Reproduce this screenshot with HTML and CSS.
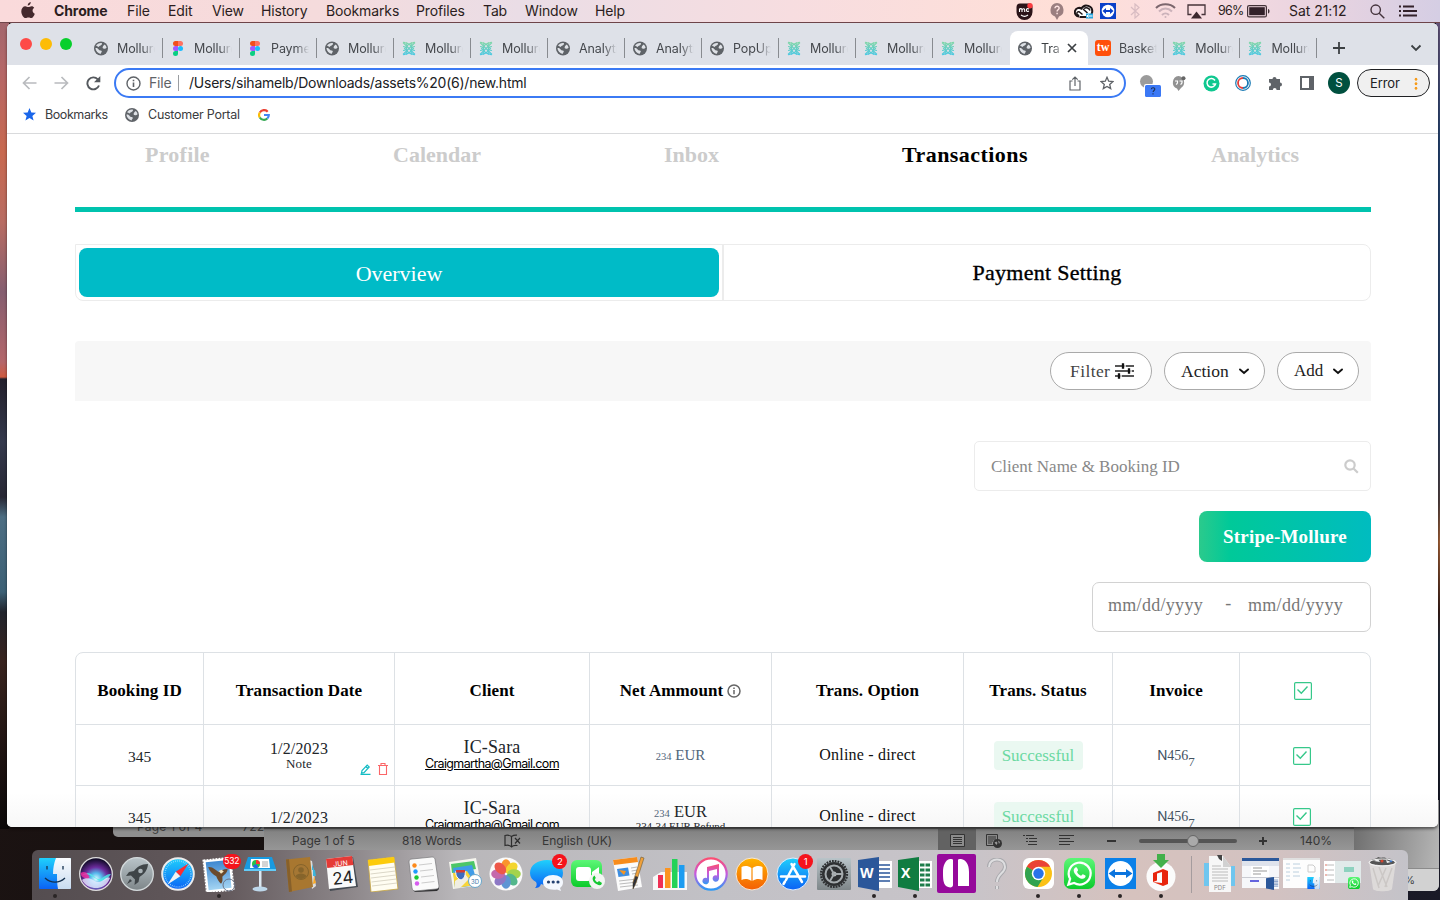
FILE: index.html
```html
<!DOCTYPE html>
<html lang="en">
<head>
<meta charset="utf-8">
<title>Transactions</title>
<link rel="stylesheet" href="styles.css">
</head>
<body>
<svg class="defs" width="0" height="0" aria-hidden="true">
  <defs>
    <linearGradient id="gm" x1="0" y1="0" x2="0" y2="1"><stop offset="0" stop-color="#7fd6a8"/><stop offset="1" stop-color="#4cc8e0"/></linearGradient>
    <linearGradient id="gblue" x1="0" y1="0" x2="0" y2="1"><stop offset="0" stop-color="#1fd0fc"/><stop offset="1" stop-color="#0b62f5"/></linearGradient>
    <linearGradient id="gface" x1="0" y1="0" x2="0" y2="1"><stop offset="0" stop-color="#fafcff"/><stop offset="1" stop-color="#c9dcf0"/></linearGradient>
    <linearGradient id="ggreen" x1="0" y1="0" x2="0" y2="1"><stop offset="0" stop-color="#5cf777"/><stop offset="1" stop-color="#0bcb2b"/></linearGradient>
    <linearGradient id="gorange" x1="0" y1="0" x2="0" y2="1"><stop offset="0" stop-color="#ffb400"/><stop offset="1" stop-color="#f45f05"/></linearGradient>
    <linearGradient id="gsilver" x1="0" y1="0" x2="0" y2="1"><stop offset="0" stop-color="#b9c4c9"/><stop offset="1" stop-color="#7e8689"/></linearGradient>
    <linearGradient id="gnote" x1="0" y1="0" x2="0" y2="1"><stop offset="0" stop-color="#fb4d72"/><stop offset=".5" stop-color="#c55be0"/><stop offset="1" stop-color="#2d9af5"/></linearGradient>
    <linearGradient id="gsky" x1="0" y1="0" x2="0" y2="1"><stop offset="0" stop-color="#3f88d0"/><stop offset="1" stop-color="#a3d4f3"/></linearGradient>
    <radialGradient id="gsiri" cx=".5" cy=".65" r=".6"><stop offset="0" stop-color="#dffcff"/><stop offset=".3" stop-color="#55b8ec"/><stop offset=".6" stop-color="#6b2b9c"/><stop offset="1" stop-color="#140c2c"/></radialGradient>
  </defs>
  <symbol id="globe" viewBox="0 0 14 14"><circle cx="7" cy="7" r="7" fill="#5f6368"/><path d="M7.800 1.500C5.600 1 3 2.200 2 4.500c1.200-.2 1.800.7 2.600.9.500-.8 1.200-1.100 2-1.400.9-.4 1.800-1.200 1.200-2.500zM1.400 6.800c.4 3 2.600 5.200 5.400 5.700-.2-1.200.8-1.500 1-2.300.1-.9-.6-1.200-1.500-1.300-1.400-.1-1.600-1.500-2.700-2-.7-.3-1.400-.4-2.200-.1zM12.600 6.300c-.2-1.300-.8-2.500-1.800-3.400-.7.400-1.400 1.100-1.900 2-.5 1-.4 1.700.5 2 1 .3 2.100.5 3.200-.6z" fill="#dee1e6"/></symbol>
  <symbol id="figma" viewBox="0 0 10 15"><path d="M0 2.500A2.500 2.500 0 0 1 2.500 0H5v5H2.500A2.500 2.500 0 0 1 0 2.500z" fill="#f24e1e"/><path d="M5 0h2.500a2.500 2.500 0 0 1 0 5H5z" fill="#ff7262"/><path d="M0 7.500A2.500 2.500 0 0 1 2.500 5H5v5H2.500A2.500 2.500 0 0 1 0 7.500z" fill="#a259ff"/><circle cx="7.500" cy="7.500" r="2.500" fill="#1abcfe"/><path d="M0 12.500A2.500 2.500 0 0 1 2.500 10H5v2.500a2.500 2.500 0 0 1-5 0z" fill="#0acf83"/></symbol>
  <symbol id="mol" viewBox="0 0 14 14"><g fill="none" stroke="url(#gm)" stroke-width="1.100"><path d="M1 .8c3 0 4 1 4 4S4 9 1 9M13 .8c-3 0-4 1-4 4s1 4.200 4 4.200M1 13.200c3 0 4-1 4-4S4 5 1 5M13 13.200c-3 0-4-1-4-4S10 5 13 5"/><path d="M1 1l12 12M13 1 1 13"/><path d="M7 2.500 11.500 7 7 11.500 2.500 7zM4 1l3 1.800L10 1M4 13l3-1.800 3 1.800"/></g></symbol>
  <symbol id="check" viewBox="0 0 18 18"><rect x=".6" y=".6" width="16.800" height="16.800" rx="1.200" fill="#fff" stroke="#36c88a" stroke-width="1.200"/><path d="M3.500 7.600 7.300 11.300 13.500 4.600" fill="none" stroke="#36c88a" stroke-width="1.400"/></symbol>
  <symbol id="chev" viewBox="0 0 10 7"><path d="M1 1.500 5 5l4-3.500" fill="none" stroke="#111" stroke-width="1.900" stroke-linecap="round"/></symbol>
  <symbol id="wa" viewBox="0 0 32 32"><rect width="32" height="32" rx="7" fill="url(#ggreen)"/><path d="M4.500 27.500 6.300 21.500A11.300 11.300 0 1 1 10.500 25.800z" fill="none" stroke="#fff" stroke-width="2.300"/><path d="M11.500 10c1-1 1.800-.5 2.200.6l.8 1.900c.2.700-1 1.600-1 2 .8 1.700 2.200 3 4 3.700.6.100 1.400-1.700 2.100-1.400l2.500 1.200c.7.400-.2 3.200-2.600 3.500-3.500.2-9.300-4.700-9.500-8.700 0-1.100.6-2 1.500-2.800z" fill="#fff"/></symbol>
  <symbol id="word" viewBox="0 0 34 34"><path d="M19 4h15v27H19z" fill="#fff"/><path d="M21 8h11M21 12h11M21 16h11M21 20h11M21 24h11" stroke="#2a559b" stroke-width="1.500"/><path d="M0 3 21 0v34L0 30z" fill="#2b579a"/></symbol>
  <symbol id="finder" viewBox="0 0 32 31"><rect width="32" height="31" rx="1" fill="url(#gblue)"/><path d="M17 0c-2 5-3 10-3 16h4c0 5 0 10 1 15h12a1 1 0 0 0 1-1V1a1 1 0 0 0-1-1z" fill="url(#gface)"/><path d="M8 8v3.500M24 8v3.500M6 20c6 5.500 14 5.500 20 0" fill="none" stroke="#14304e" stroke-width="1.300"/></symbol>
</svg>

<div class="desktop">
  <div class="edge-left"></div>
  <div class="edge-right"></div>

  <div class="win-a"><span>Page 1 of 4</span><span>722</span></div>
  <div class="win-c"><div class="win-c-foot">%</div></div>
  <div class="win-b">
    <span class="wb wb1">Page 1 of 5</span><span class="wb wb2">818 Words</span>
    <svg class="wb3" width="17" height="14" viewBox="0 0 17 14" fill="none" stroke="#2e2e2e" stroke-width="1.200"><path d="M7.500 2.500C6 1.500 3 1 1 1.500v10c2-.5 5 0 6.500 1.200zM7.500 2.500C9 1.500 11 1 13 1.200M7.500 12.700c1.500-1.200 3.500-1.700 6-1.200M11 4l5 5.500M16 4l-5 5.500"/></svg>
    <span class="wb wb4">English (UK)</span>
    <span class="views">
      <span class="view-on"><svg width="15" height="13" viewBox="0 0 15 13"><path d="M.5.500h14v12H.5z" fill="#8c8c8c" stroke="#333"/><path d="M3 3.500h9M3 5.500h9M3 7.500h9M3 9.500h9" stroke="#333"/></svg></span>
      <svg width="16" height="14" viewBox="0 0 16 14"><path d="M.5.500h11v11H.5z" fill="none" stroke="#333"/><path d="M2 3h8M2 5h8M2 7h5M2 9h4" stroke="#333"/><circle cx="11.500" cy="9.500" r="4.500" fill="#333"/><path d="M8.500 8.500l2-1 1 1.500-1 2zM12 6.500l2 1.500-1 2z" fill="#999"/></svg>
      <svg width="15" height="11" viewBox="0 0 15 11"><path d="M0 .5h2M3 .5h8M3 3.500h2M6 3.500h8M3 6.500h2M6 6.500h8M5 9.500h9" stroke="#333" stroke-width="1.200"/></svg>
      <svg width="15" height="11" viewBox="0 0 15 11"><path d="M0 .5h15M0 3.500h11M0 6.500h15M0 9.500h11" stroke="#333" stroke-width="1.200"/></svg>
    </span>
    <span class="zoomer"><i class="minus"></i><span class="track"><i class="knob"></i></span><i class="plus"></i><span>140%</span></span>
  </div>

  <header class="menubar">
    <nav class="menus">
      <svg width="14" height="17" viewBox="0 0 14 17"><path d="M9.800 0c.1 1.900-1.400 3.600-3.100 3.600C6.500 2 8 .3 9.800 0zM13.200 5.700c-2.500 1.600-1.900 4.900.6 6-.6 1.900-2 4.300-3.500 4.300-1 0-1.600-.6-2.800-.6s-1.900.6-2.900.6C2.500 16 .3 12.500.3 9.200c0-3 1.900-5 4-5 1.200 0 2.100.8 3.100.8.900 0 1.900-.8 3.300-.8 1 0 2 .6 2.500 1.500z" fill="#44292d"/></svg>
      <b>Chrome</b><span>File</span><span>Edit</span><span>View</span><span>History</span><span>Bookmarks</span><span>Profiles</span><span>Tab</span><span>Window</span><span>Help</span>
    </nav>
    <div class="status">
      <svg width="17" height="17" viewBox="0 0 17 17"><path d="M4 .5h9a3.500 3.500 0 0 1 3.500 3.500v5A8 8 0 0 1 .5 9V4A3.500 3.500 0 0 1 4 .5z" fill="#2b1418"/><path d="M3.500 9V5.500M3.500 6.500c1-1.500 2.500-1 2.500.5V9M6 7c.7-1.800 2.700-1.500 2.700.3V9M13 6c-1.500-1-3 0-2.500 1.500s1.500 1 2.500.5M5 12c2 1.500 5 1.500 7 0" fill="none" stroke="#fff" stroke-width="1.100"/><circle cx="14" cy="2.800" r="2.700" fill="#fa3d41"/></svg>
      <svg width="14" height="17" viewBox="0 0 14 17"><path d="M7 0a7 7 0 0 1 2 13.500L7 17l-2-3.500A7 7 0 0 1 7 0z" fill="#9b7f80"/><path d="M5 5.200c0-2.700 4.300-2.500 4.100 0C9 6.800 7.100 6.800 7.100 8.500M7.100 9.700v1.500" fill="none" stroke="#ffe4e2" stroke-width="1.500"/></svg>
      <svg width="20" height="15" viewBox="0 0 20 15"><path d="M5 12.500a4.300 4.300 0 1 1 2.500-7.900A5.700 5.700 0 1 1 12.500 13H5.500" fill="#fff" stroke="#1d1416" stroke-width="2"/><path d="M8.500 10.500 5.500 8a1.700 1.700 0 1 0-.3 3M9 5l4.500 4M16 6.500a4 4 0 0 0-6-2" fill="none" stroke="#1d1416" stroke-width="1.500"/><path d="M12 9.500h7v5h-7z" fill="#27a5df"/><path d="M12.500 12h6M14.500 10.500 13 12l1.500 1.500" fill="none" stroke="#fff"/></svg>
      <svg width="16" height="16" viewBox="0 0 16 16"><rect width="16" height="16" fill="#0a3fc8"/><circle cx="8" cy="8" r="6.300" fill="#fff"/><path d="M2.500 8 6 5v2h4V5l3.500 3L10 11V9H6v2z" fill="#0a3fc8"/></svg>
      <svg width="10" height="16" viewBox="0 0 10 16"><path d="M1 4l8 7.500-4 3.500V1l4 3.500L1 12" fill="none" stroke="#d8bcc2" stroke-width="1.200"/></svg>
      <svg width="21" height="16" viewBox="0 0 21 16" fill="none" stroke-width="2"><path d="M1 5c5-5 14-5 19 0" stroke="#7b666d"/><path d="M4 8.500c4-4 9-4 13 0M7 12c2-2 5-2 7 0" stroke="#cbb2ba"/><circle cx="10.500" cy="14" r="1" fill="#cbb2ba" stroke="none"/></svg>
      <svg width="19" height="15" viewBox="0 0 19 15"><path d="M4.500 10.500H1V1h17v9.500h-3.500" fill="none" stroke="#463339" stroke-width="1.300"/><path d="M9.500 7.500 15 14.500H4z" fill="#3c282e"/></svg>
      <span class="pct">96%</span>
      <svg width="23" height="13" viewBox="0 0 23 13"><rect x=".6" y=".6" width="18.800" height="11.300" rx="1.500" fill="none" stroke="#433238" stroke-width="1.200"/><rect x="2.200" y="2.200" width="15.600" height="8" fill="#33212a"/><path d="M21 4c2 .5 2 4 0 4.500z" fill="#433238"/></svg>
      <span class="clock">Sat 21:12</span>
      <svg width="15" height="15" viewBox="0 0 15 15" fill="none" stroke="#43323b" stroke-width="1.400"><circle cx="5.700" cy="5.700" r="4.700"/><path d="M9.200 9.200 14.300 14.300"/></svg>
      <svg width="18" height="12" viewBox="0 0 18 12"><path d="M0 1.500h2M4 1.500h11M0 6h2M4 6h14M0 10.500h2M4 10.500h14" stroke="#33212a" stroke-width="1.800"/></svg>
    </div>
  </header>

  <section class="chrome">
    <div class="tabstrip">
      <div class="lights"><i class="r"></i><i class="y"></i><i class="g"></i></div>
      <div class="tabs">
        <div class="tab"><svg><use href="#globe"/></svg><span>Mollure</span></div>
        <div class="tab"><svg><use href="#figma"/></svg><span>Mollure</span></div>
        <div class="tab"><svg><use href="#figma"/></svg><span>Payme</span></div>
        <div class="tab"><svg><use href="#globe"/></svg><span>Mollure</span></div>
        <div class="tab"><svg><use href="#mol"/></svg><span>Mollure</span></div>
        <div class="tab"><svg><use href="#mol"/></svg><span>Mollure</span></div>
        <div class="tab"><svg><use href="#globe"/></svg><span>Analyti</span></div>
        <div class="tab"><svg><use href="#globe"/></svg><span>Analyti</span></div>
        <div class="tab"><svg><use href="#globe"/></svg><span>PopUp</span></div>
        <div class="tab"><svg><use href="#mol"/></svg><span>Mollure</span></div>
        <div class="tab"><svg><use href="#mol"/></svg><span>Mollure</span></div>
        <div class="tab nosep"><svg><use href="#mol"/></svg><span>Mollure</span></div>
        <div class="tab active"><svg><use href="#globe"/></svg><span>Tra</span><svg class="x" viewBox="0 0 10 10"><path d="M1 1l8 8M9 1 1 9" stroke="#3c4043" stroke-width="1.700"/></svg></div>
        <div class="tab late"><em>tw</em><span>Basket</span></div>
        <div class="tab late"><svg><use href="#mol"/></svg><span>Mollure</span></div>
        <div class="tab late"><svg><use href="#mol"/></svg><span>Mollure</span></div>
      </div>
      <svg class="newtab" width="12" height="12" viewBox="0 0 12 12"><path d="M6 0v12M0 6h12" stroke="#3c4043" stroke-width="1.800"/></svg>
      <svg class="tabsmenu" width="12" height="8" viewBox="0 0 12 8"><path d="M1.500 1.500 6 6l4.500-4.500" fill="none" stroke="#3c4043" stroke-width="1.800"/></svg>
    </div>
    <div class="toolbar">
      <div class="navbtns">
        <svg width="15" height="14" viewBox="0 0 15 14" fill="none" stroke="#b9bbbe" stroke-width="1.700"><path d="M14.500 7H1.500M7.500 1 1.500 7l6 6"/></svg>
        <svg width="15" height="14" viewBox="0 0 15 14" fill="none" stroke="#b9bbbe" stroke-width="1.700"><path d="M.5 7h13M7.500 1l6 6-6 6"/></svg>
        <svg width="15" height="15" viewBox="0 0 15 15"><path d="M13 9.500A6 6 0 1 1 11.800 3.300" fill="none" stroke="#55595e" stroke-width="1.900"/><path d="M14.300 0v6.300H8z" fill="#55595e"/></svg>
      </div>
      <div class="omni">
        <svg width="15" height="15" viewBox="0 0 15 15"><circle cx="7.500" cy="7.500" r="6.500" fill="none" stroke="#5f6368" stroke-width="1.400"/><path d="M7.500 6.500V11M7.500 3.700v1.600" stroke="#5f6368" stroke-width="1.600"/></svg>
        <span class="scheme">File</span><i></i><span class="url">/Users/sihamelb/Downloads/assets%20(6)/new.html</span>
        <svg class="share" width="12" height="15" viewBox="0 0 12 15" fill="none" stroke="#5f6368" stroke-width="1.200"><path d="M3.500 5H1v9h10V5H8.500M6 10V1.200M3.300 3.700 6 1l2.700 2.700"/></svg>
        <svg width="14" height="14" viewBox="0 0 14 14"><path d="M7 1.300 8.700 5.200l4.200.4-3.200 2.800 1 4.200L7 10.400l-3.700 2.200 1-4.200L1.100 5.600l4.200-.4z" fill="none" stroke="#5f6368" stroke-width="1.300"/></svg>
      </div>
      <div class="exts">
        <svg width="22" height="22" viewBox="0 0 22 22"><circle cx="7.500" cy="6.500" r="6.500" fill="#9b9b9b"/><rect x="5" y="9" width="17" height="13" rx="2" fill="#fff"/><rect x="6" y="10" width="16" height="12" rx="1.500" fill="#3b78f5"/><path d="M12.300 14.300c.2-2.200 3.700-2 3.500 0-.1 1.200-1.700 1.200-1.700 2.800M14 18.200v1.200" fill="none" stroke="#1c3054" stroke-width="1.100"/></svg>
        <svg width="14" height="15" viewBox="0 0 14 15"><path d="M6.500 0A6.500 6.500 0 0 1 9 12l-2.500 3L5 12.500A6.500 6.500 0 0 1 6.500 0z" fill="#929292"/><path d="M3 5h2.500v1.500c0 1-.5 1.500-1.500 2M7.500 5H10v1.500c0 1-.5 1.500-1.500 2" stroke="#fff" stroke-width="1.200" fill="none"/><circle cx="11.500" cy="2.300" r="2" fill="#666"/></svg>
        <svg width="17" height="17" viewBox="0 0 17 17"><circle cx="8.500" cy="8.500" r="8" fill="#0fc890"/><path d="M12 5.500A4.300 4.300 0 1 0 12.500 9H9.500" fill="none" stroke="#fff" stroke-width="1.500"/></svg>
        <svg width="16" height="16" viewBox="0 0 16 16" fill="none"><circle cx="8" cy="8" r="7.300" stroke="#1a7bb5" stroke-width="1.200"/><path d="M8 3a5 5 0 0 1 0 10" stroke="#1a7bb5" stroke-width="1.800"/><path d="M8 13A5 5 0 0 1 8 3" stroke="#e43f3c" stroke-width="1.800"/></svg>
        <svg width="15" height="15" viewBox="0 0 15 15"><path d="M1 3h3.500a2 2 0 1 1 4 0H12v3.500a2 2 0 1 1 0 4V14H8.600a1.900 1.900 0 0 0-3.800 0H1v-3.600a2 2 0 0 0 0-4z" fill="#5f6368"/></svg>
        <svg width="14" height="14" viewBox="0 0 14 14"><path d="M1 1h12v12H1z" fill="none" stroke="#5f6368" stroke-width="2"/><path d="M9 0h5v14H9z" fill="#5f6368"/></svg>
        <span class="avatar">S</span>
      </div>
      <div class="error"><span>Error</span><i></i></div>
    </div>
    <div class="bookmarks">
      <svg width="13" height="13" viewBox="0 0 14 14"><path d="M7 0l2 4.800 5 .4-3.900 3.300 1.300 5L7 10.800l-4.400 2.700 1.300-5L0 5.200l5-.4z" fill="#1a66ea"/></svg><span class="bm1">Bookmarks</span>
      <svg class="bmg" width="14" height="14"><use href="#globe"/></svg><span class="bm2">Customer Portal</span>
      <svg width="12" height="12" viewBox="0 0 12 12" fill="none" stroke-width="2.200"><path d="M9.700 2.700A4.900 4.900 0 0 0 1.800 3.500" stroke="#ea4335"/><path d="M1.800 3.500a4.900 4.900 0 0 0 0 5" stroke="#fbbc05"/><path d="M1.800 8.500a4.900 4.900 0 0 0 7.500 1" stroke="#34a853"/><path d="M9.300 9.500A4.800 4.800 0 0 0 10.800 6H6" stroke="#4285f4"/></svg>
    </div>

    <main class="page">
      <nav class="sitenav"><span class="n1">Profile</span><span class="n2">Calendar</span><span class="n3">Inbox</span><span class="n4">Transactions</span><span class="n5">Analytics</span></nav>
      <div class="rule"></div>
      <div class="switch"><div class="sw-left"><div class="pill">Overview</div></div><div class="sw-right">Payment Setting</div></div>
      <div class="actions">
        <button class="filter">Filter<svg width="19" height="16" viewBox="0 0 19 16"><path d="M0 3h19M0 8h19M0 13h19" stroke="#222" stroke-width="1.700"/><path d="M8 .3v5.400M14 5.300v5.400M4 10.300v5.400" stroke="#111" stroke-width="2.300"/><path d="M9.500 2h1.200v2H9.500zM15.500 7h1.200v2h-1.200zM5.500 12h1.200v2H5.500z" fill="#fff"/></svg></button>
        <button class="action">Action<svg width="10" height="7"><use href="#chev"/></svg></button>
        <button class="add">Add<svg width="10" height="7"><use href="#chev"/></svg></button>
      </div>
      <div class="search"><span>Client Name &amp; Booking ID</span><svg width="15" height="15" viewBox="0 0 15 15" fill="none" stroke="#ccc" stroke-width="2.200"><circle cx="6" cy="6" r="4.700"/><path d="M9.500 9.500 13.800 13.800"/></svg></div>
      <div class="stripe">Stripe-Mollure</div>
      <div class="dates"><span>mm/dd/yyyy</span><i>-</i><span>mm/dd/yyyy</span></div>
      <div class="table">
        <div class="row head"><div>Booking ID</div><div>Transaction Date</div><div>Client</div><div class="net">Net Ammount<svg width="14" height="14" viewBox="0 0 14 14"><circle cx="7" cy="7" r="6" fill="none" stroke="#666" stroke-width="1.500"/><path d="M7 6v4.200M7 3.500V5" stroke="#666" stroke-width="1.500"/></svg></div><div>Trans. Option</div><div>Trans. Status</div><div>Invoice</div><div class="ckh"><svg width="18" height="18"><use href="#check"/></svg></div></div>
        <div class="row">
          <div class="id">345</div>
          <div class="date"><span>1/2/2023</span><small>Note</small>
            <span class="tools"><svg width="11" height="11" viewBox="0 0 11 11" fill="none" stroke="#14bcc4" stroke-width="1.200"><path d="M1.500 9 2 6.500 7.200 1l2 2L4 8.600zM5.800 2.500l2 2M.5 10.400h10"/></svg><svg width="10" height="12" viewBox="0 0 10 12" fill="none" stroke="#fb6668" stroke-width="1.100"><path d="M0 2.500h10M3 2.500v-2h4v2M1.500 2.500v9h7v-9"/></svg></span></div>
          <div class="client"><span>IC-Sara</span><u>Craigmartha@Gmail.com</u></div>
          <div class="amt"><span><small>234</small> EUR</span></div>
          <div class="opt">Online - direct</div>
          <div><span class="ok">Successful</span></div>
          <div class="inv"><span><b>N</b>456<sub>7</sub></span></div>
          <div class="ck"><svg width="18" height="18"><use href="#check"/></svg></div>
        </div>
        <div class="row">
          <div class="id">345</div>
          <div class="date one"><span>1/2/2023</span></div>
          <div class="client"><span>IC-Sara</span><u>Craigmartha@Gmail.com</u></div>
          <div class="amt two"><span><small>234</small> EUR</span><em>234-34 EUR Refund</em></div>
          <div class="opt">Online - direct</div>
          <div><span class="ok">Successful</span></div>
          <div class="inv"><span><b>N</b>456<sub>7</sub></span></div>
          <div class="ck"><svg width="18" height="18"><use href="#check"/></svg></div>
        </div>
      </div>
    </main>
  </section>

  <footer class="dock">
    <div class="ic run"><svg width="32" height="31"><use href="#finder"/></svg></div>
    <div class="ic"><svg width="34" height="34" viewBox="0 0 34 34"><circle cx="17" cy="17" r="16.300" fill="url(#gsiri)" stroke="#ddd" stroke-width="1.300"/><path d="M2 19c8-8 13 2 17 3s8-6 13-5c-4 6-8 9-13 6S9 15 2 19z" fill="#4ff0e8" opacity=".8"/><path d="M3 23c8-6 12 3 17 2s7-6 11-4c-3 8-9 10-14 10S6 29 3 23z" fill="#e9eaff" opacity=".8"/><path d="M1.500 16c5-3 8 1 9 5-3 1-6 0-8-2z" fill="#f52ca0" opacity=".8"/></svg></div>
    <div class="ic"><svg width="34" height="34" viewBox="0 0 34 34"><circle cx="17" cy="17" r="16.300" fill="url(#gsilver)" stroke="#d4dadc" stroke-width="1.300"/><path d="M28 7c-7 0-11 3-14 7l-5 1-3 4 5-.5 4 4-.5 5.500 4-3 1-5c5-3 8-7 8.500-13zM10 22l-3 5 5-3z" fill="#3f4548"/><circle cx="20.500" cy="14" r="2.300" fill="#a9b2b6"/></svg></div>
    <div class="ic"><svg width="34" height="34" viewBox="0 0 34 34"><circle cx="17" cy="17" r="15.800" fill="url(#gblue)" stroke="#ececec" stroke-width="2"/><circle cx="17" cy="17" r="13" fill="none" stroke="#aee1ff" stroke-width="1.500" stroke-dasharray=".6 1.400"/><path d="M27.500 6.500 19.300 19.300l-4.600-4.600z" fill="#fb2d31"/><path d="M6.500 27.500l8.200-12.800 4.600 4.600z" fill="#f1f1f1"/></svg></div>
    <div class="ic run"><svg width="34" height="36" viewBox="0 0 34 36"><g transform="rotate(-6 17 18)"><rect x="3" y="3" width="27" height="32" fill="#fff" stroke="#fff" stroke-width="2" stroke-dasharray="2 1"/><rect x="5" y="5" width="23" height="28" fill="url(#gsky)"/><path d="M7 10c5 0 7 4 10 6 3-1 6-3 9-2 0 3-3 5-6 7 0 3 0 5-2 7-2-2-3-5-4-8-3-2-6-5-7-10z" fill="#6b4a2c"/><path d="M17 15l3-1 2 2-3 2z" fill="#f5e6c0"/></g><circle cx="27" cy="29" r="6" fill="none" stroke="#6c7486" stroke-width="1"/></svg><span class="badge wide">532</span></div>
    <div class="ic"><svg width="32" height="36" viewBox="0 0 32 36"><path d="M4 1h24l4 12H0z" fill="#189ae0"/><path d="M0 13h32v2H0z" fill="#63cbf7"/><path d="M7 3h18l1 9H6z" fill="#fff"/><circle cx="12" cy="8" r="4" fill="#28c04a"/><path d="M12 8V4a4 4 0 0 1 4 4z" fill="#f33"/><path d="M8.500 10a4 4 0 0 0 6 1L12 8z" fill="#2a62ed"/><path d="M18 6h6M18 8h6M18 10h6" stroke="#aaa"/><path d="M15 15h2.500v17H15z" fill="#dbe8f2"/><ellipse cx="16" cy="33" rx="7.500" ry="2.500" fill="#bdd7ea"/></svg></div>
    <div class="ic"><svg width="32" height="36" viewBox="0 0 32 36"><path d="M24 4l3 1 4 25-4 3z" fill="#ddd"/><path d="M27 8l2 6h-2zM28 14h2l1 6h-3z" fill="#3bb5dc"/><path d="M29 20l2 7-3 1z" fill="#f9a825"/><path d="M1 3.500 25 1l3 30L4 36z" fill="#a87730"/><path d="M1 3.500 4 3.200 7 35.400l-3 .6z" fill="#87602a"/><circle cx="16" cy="16" r="7.500" fill="#a57734" stroke="#86642b"/><circle cx="16" cy="14" r="2.800" fill="#86642b"/><path d="M10.500 20c2-3.500 9-3.500 11 0-3 4-8 4-11 0z" fill="#86642b"/></svg></div>
    <div class="ic"><svg width="33" height="36" viewBox="0 0 33 36"><path d="M1 4 27 1l5 30-28 4z" fill="#454b52"/><path d="M0 3 26 0l4 30-27 3z" fill="#fafafa"/><path d="M0 3 26 0l1.500 9L1.300 12z" fill="#e53a36"/><g font-family="Inter,sans-serif" transform="rotate(-6 15 20)"><text x="8.500" y="10" font-size="7" fill="#fff">JUN</text><text x="6" y="28" font-size="17" fill="#222">24</text></g></svg></div>
    <div class="ic"><svg width="32" height="36" viewBox="0 0 32 36"><path d="M1 4 27 1l4 32-27 3z" fill="#fffdf2" stroke="#c8a640" stroke-width=".8"/><path d="M1 4 27 1l.8 5.500L1.800 10z" fill="#fccb0c"/><path d="M3 14l25-3M3.500 18l25-3M4 22l25-3M4.500 26l25-3M5 30l25-3" stroke="#d2cdbd" stroke-width=".8"/></svg></div>
    <div class="ic"><svg width="32" height="36" viewBox="0 0 32 36"><path d="M5 34 30 32l1-2 0 3-2 2L7 36z" fill="#2e2e30"/><path d="M4 3 24 1c1.500 0 2.500.6 3 2l4 27c0 2-1 3-3 3L7 35c-1.500 0-2.500-1-3-3L1 6c0-2 1-3 3-3z" fill="#fafafa" stroke="#77777a" stroke-width=".7"/><circle cx="6.500" cy="9.500" r="2.200" fill="#fc8a1b"/><circle cx="7.500" cy="15.500" r="2.200" fill="#1e9afc"/><circle cx="8.500" cy="21.500" r="2.200" fill="#19c932"/><circle cx="9" cy="27.500" r="2.200" fill="#d75cf0"/><path d="M11 9l13-1.500M12 15l13-1.500M13 21l13-1.500M13.500 27l13-1.500" stroke="#ccc"/></svg></div>
    <div class="ic"><svg width="34" height="34" viewBox="0 0 34 34"><path d="M1 5 28 1l5 27-28 4z" fill="#f5f5ee"/><path d="M3 7l23-3 2 8-24 4z" fill="#4cc667"/><path d="M5 11l19-3 6 20-23 3z" fill="#3f9ce8"/><path d="M5 16l14-2 9 14-21 3z" fill="#f9d438"/><path d="M7 24l10-7 4 5-9 9H7z" fill="#f0eee2"/><path d="M8 14h9c1 6-2 8-4 9-3-1-6-4-5-9z" fill="#3d6cc0" stroke="#fff"/><path d="M8 13h9v2.500H8z" fill="#d63c34"/><circle cx="27" cy="24" r="6.500" fill="#fff" stroke="#66a5cb"/><text x="23" y="26.500" font-size="6" font-family="Inter,sans-serif" fill="#3a77a8">3D</text></svg></div>
    <div class="ic"><svg width="34" height="34" viewBox="0 0 34 34"><circle cx="17" cy="17" r="16.500" fill="#fafafa"/><g opacity=".9"><ellipse cx="17" cy="9" rx="4.800" ry="6.800" fill="#fb8a16"/><ellipse cx="17" cy="9" rx="4.800" ry="6.800" fill="#f3d21a" transform="rotate(45 17 17)"/><ellipse cx="17" cy="9" rx="4.800" ry="6.800" fill="#9bcf3a" transform="rotate(90 17 17)"/><ellipse cx="17" cy="9" rx="4.800" ry="6.800" fill="#42b080" transform="rotate(135 17 17)"/><ellipse cx="17" cy="9" rx="4.800" ry="6.800" fill="#4d8bd0" transform="rotate(180 17 17)"/><ellipse cx="17" cy="9" rx="4.800" ry="6.800" fill="#826bc0" transform="rotate(225 17 17)"/><ellipse cx="17" cy="9" rx="4.800" ry="6.800" fill="#c05aa4" transform="rotate(270 17 17)"/><ellipse cx="17" cy="9" rx="4.800" ry="6.800" fill="#ec4636" transform="rotate(315 17 17)"/></g></svg></div>
    <div class="ic"><svg width="34" height="34" viewBox="0 0 34 34"><path d="M17 3c9 0 16 5 16 13S26 28 17 28c-2 0-4-.2-6-1-1 3-3 4-6 4 2-2 2-4 1-6C2 23 0 20 0 16 0 8 8 3 17 3z" fill="url(#gblue)"/><path d="M23 18c6 0 10 3 10 7 0 3-1 4-3 6l1 3-4-1.500c-8 1-14-2-14-7.500 0-4 4-7 10-7z" fill="#f4f8fe"/><circle cx="18.500" cy="25" r="1.600" fill="#244272"/><circle cx="23.200" cy="25" r="1.600" fill="#244272"/><circle cx="28" cy="25" r="1.600" fill="#244272"/></svg><span class="badge">2</span></div>
    <div class="ic"><svg width="34" height="34" viewBox="0 0 34 34"><rect y="3" width="31" height="27" rx="6" fill="url(#ggreen)"/><rect x="5" y="10" width="15" height="14" rx="3" fill="#fff"/><path d="M21 15l7-5v14l-7-5z" fill="#fff"/><circle cx="26" cy="24" r="8" fill="#f2f6f2"/><path d="M22 20c-2 4 4 9 8 8l1-2-3-2-1.500 1.200c-1.500-.7-2.200-1.500-2.700-3l1-1.200-1.300-2.500z" fill="#15c832"/></svg></div>
    <div class="ic"><svg width="34" height="36" viewBox="0 0 34 36"><path d="M1 4 25 1l5 30-24 4z" fill="#fbfbfb"/><path d="M1 4 25 1l1 5L2 9z" fill="#f78c1c"/><path d="M5 13l11-1.500 1.500 8L6.500 21z" fill="#3d8de0"/><path d="M7 14l7 1-2 4z" fill="#f49523"/><path d="M19 12l6-1M19.500 15l6-1M20 18l6-1M7 25l18-2M7.500 28l18-2M8 31l18-2" stroke="#bbb"/><path d="M29 1l3 1-8 25-3 6v-7z" fill="#f0a03a" stroke="#6a5a3a" stroke-width=".6"/><path d="M23.500 20l2.500 1-3 8-2 4v-6z" fill="#303238"/></svg></div>
    <div class="ic"><svg width="34" height="34" viewBox="0 0 34 34"><path d="M0 20 8 15h26v18H0z" fill="#f8f8f8"/><path d="M5 18h5v13H5z" fill="#ef3055"/><path d="M12 11h5.500v20H12z" fill="#fc9420"/><path d="M19 2h5.500v29H19z" fill="#23d258"/><path d="M26 8h5.500v23H26z" fill="#1c9cf1"/></svg></div>
    <div class="ic"><svg width="34" height="34" viewBox="0 0 34 34"><circle cx="17" cy="17" r="15.700" fill="#fff" stroke="url(#gnote)" stroke-width="2.200"/><path d="M13 10 25 7v14.500a3.200 3.200 0 1 1-2-3V12l-8 2v10a3.300 3.300 0 1 1-2-3z" fill="url(#gnote)"/></svg></div>
    <div class="ic"><svg width="34" height="34" viewBox="0 0 34 34"><circle cx="17" cy="17" r="16" fill="url(#gorange)" stroke="#f6e8d8"/><path d="M16.400 11C13 8.500 9.500 8.500 6.500 10v13c3-1.500 6.500-1.500 9.900 1zM17.600 11c3.400-2.500 6.900-2.500 9.900-1v13c-3-1.500-6.500-1.500-9.900 1z" fill="#fff"/></svg></div>
    <div class="ic"><svg width="34" height="34" viewBox="0 0 34 34"><circle cx="17" cy="17" r="16" fill="url(#gblue)" stroke="#dfeeff"/><path d="M18.500 7 10 23M15.500 7 26 25M5 19.500h24M9 24.500l-1.500 2.500" fill="none" stroke="#fff" stroke-width="2.500" stroke-linecap="round"/></svg><span class="badge">1</span></div>
    <div class="ic"><svg width="34" height="32" viewBox="0 0 34 32"><rect width="34" height="32" rx="1" fill="url(#gsilver)"/><circle cx="17" cy="16" r="13" fill="none" stroke="#2e3032" stroke-width="2.200" stroke-dasharray="1.800 1"/><circle cx="17" cy="16" r="12" fill="#2e3032"/><circle cx="17" cy="16" r="8.500" fill="none" stroke="#a5abae" stroke-width="2"/><circle cx="17" cy="16" r="2.500" fill="#b4b9bb"/><path d="M17 16h8M17 16l-4-7M17 16l-4 7" stroke="#a5abae" stroke-width="1.800"/></svg></div>
    <div class="ic run"><svg width="34" height="34"><use href="#word"/></svg><strong>W</strong></div>
    <div class="ic run"><svg width="34" height="34" viewBox="0 0 34 34"><path d="M19 4h15v27H19z" fill="#fff"/><path d="M22 8h10M22 13h10M22 18h10M22 23h10M22 28h10" stroke="#1d7d4a" stroke-width="3" stroke-dasharray="4.500 1"/><path d="M0 3 21 0v34L0 30z" fill="#107c41"/></svg><strong>X</strong></div>
    <div class="ic"><svg width="39" height="39" viewBox="0 0 39 39"><rect width="39" height="39" rx="2" fill="#96099b"/><path d="M16 6v25c0 3-4 3-7 1-3-3-3-8-3-14S8 6 13 5c2 0 3 0 3 1zM21 6v26h11V18C32 10 29 6 24 5c-2 0-3 0-3 1z" fill="#fff"/></svg></div>
    <div class="ic"><svg width="20" height="32" viewBox="0 0 20 32"><path d="M2 9C2-1 18-1 18 9c0 6-8 7-8 15M10 28v3" fill="none" stroke="#a9a9ad" stroke-width="4"/><path d="M2 9C2-1 18-1 18 9c0 6-8 7-8 15M10 28v3" fill="none" stroke="#dedee0" stroke-width="2"/></svg></div>
    <div class="ic run"><svg width="31" height="31" viewBox="0 0 31 31"><rect width="31" height="31" rx="6" fill="#fff"/><circle cx="15.500" cy="15.500" r="13.500" fill="#fbc116"/><path d="M15.500 15.500 3.800 8.700A13.500 13.500 0 0 1 27.200 8.700H15.500z" fill="#ea4335"/><path d="M3.800 8.700A13.500 13.500 0 0 0 14.500 29l6.500-10.500-5.500-3z" fill="#31a350"/><circle cx="15.500" cy="15.500" r="6.700" fill="#fff"/><circle cx="15.500" cy="15.500" r="5.200" fill="#2973e8"/></svg></div>
    <div class="ic run"><svg width="31" height="31"><use href="#wa"/></svg></div>
    <div class="ic run"><svg width="31" height="31" viewBox="0 0 31 31"><rect width="31" height="31" fill="#0b80e8"/><circle cx="15.500" cy="15.500" r="12.500" fill="#fff"/><path d="M3.500 15.500 10 11v3h11v-3l6.500 4.500L21 20v-3H10v3z" fill="#0b74de"/></svg></div>
    <div class="ic run"><svg class="office" width="30" height="37" viewBox="0 0 30 37"><circle cx="15" cy="22.500" r="14.500" fill="#fbfbfb"/><path d="M7 19l10-4 5 2v13l-5 2-10-4 9 1V18l-5 1.500v7L7 28z" fill="#e8240c"/><path d="M11 0h8v6h4l-8 8-8-8h4z" fill="#43b04a"/></svg></div>
    <div class="sep"></div>
    <div class="ic"><svg width="31" height="37" viewBox="0 0 31 37"><path d="M0 8h12l2 3h17v20H0z" fill="#6fc6ef"/><path d="M5 1h14l8 11v25H5z" fill="#f7f7f7"/><path d="M19 1v11h8z" fill="#d1d1d1"/><path d="M13 0h5v6l-3-2z" fill="#444"/><path d="M8 11h9M8 14h16M8 17h16M8 20h16M8 23h16M8 26h16" stroke="#bbb"/><text x="10" y="35" font-family="Inter,sans-serif" font-size="6" fill="#888">PDF</text></svg></div>
    <div class="ic"><svg width="37" height="33" viewBox="0 0 37 33"><rect y="1" width="37" height="30" fill="#f6f7fa"/><path d="M0 1h37v3H0z" fill="#2b579a"/><path d="M0 4h37v5H0z" fill="#dfe3ec"/><path d="M9 9h18v11H9z" fill="#fff"/><path d="M11 11h9M11 14h14M11 17h8" stroke="#999"/><path d="M0 20h37v1H0z" fill="#c9cbd2"/><path d="M8 24h9" stroke="#6464de" stroke-width="2"/><use href="#word" x="24" y="20" width="13" height="13"/></svg></div>
    <div class="ic"><svg width="37" height="33" viewBox="0 0 37 33"><rect y="1" width="37" height="30" fill="#fdfdfd"/><path d="M0 1h37v2H0z" fill="#e0e0e0"/><path d="M10 7h7M10 11h8M10 15h6M10 19h7M3 7h4M3 11h4M3 15h4M3 19h4M3 23h4" stroke="#bcd0df"/><path d="M25 8h5l2 2v5h-7z" fill="none" stroke="#ccc"/><use href="#finder" x="24" y="20" width="13" height="12"/></svg></div>
    <div class="ic"><svg width="37" height="30" viewBox="0 0 37 30"><rect y="2" width="37" height="22" fill="#e1eaea"/><path d="M0 2h11v22H0z" fill="#fff"/><path d="M3 6h7M3 11h7M3 16h7M3 21h7" stroke="#bcbcbc"/><path d="M1.500 6h1M1.500 11h1M1.500 16h1" stroke="#d76" stroke-width="2"/><path d="M20 8h10v5H20z" fill="#8ed2bf"/><use href="#wa" x="24" y="18" width="12" height="12"/></svg></div>
    <div class="ic"><svg width="29" height="36" viewBox="0 0 29 36"><path d="M1 5h27l-4 28c-1 3-18 3-19 0z" fill="#dddad9"/><path d="M5 12l6 20M11 11l8 20M24 12 17 31M18 12 10 30" stroke="#cbc7c5" stroke-width="1.500"/><path d="M2 7C2 2 8 4 10 1c4 2 6-1 9 2 5-1 7 2 8 4-4 3-21 3-25 0z" fill="#555"/><path d="M6 5l4-2 2 3zM18 4l5 2-4 1z" fill="#efefef"/><circle cx="14" cy="5" r="1.500" fill="#d3452f"/><circle cx="23" cy="5" r="1.300" fill="#3c75c4"/><ellipse cx="14.500" cy="6.500" rx="13.500" ry="3.500" fill="none" stroke="#f4f4f4"/></svg></div>
  </footer>
</div>
</body>
</html>
```
FILE: styles.css
```css
* { box-sizing: border-box; }
body { margin: 0; overflow: hidden; font-family: Inter, Roboto, "Liberation Sans", sans-serif; }
svg { display: block; flex: none; }
.defs { position: absolute; }
i, em { font-style: normal; }

.desktop { position: relative; width: 1440px; height: 900px; overflow: hidden; background: linear-gradient(100deg, #1d1413, #130e0e 40%, #1a1a27); }
.edge-left { position: absolute; left: 0; top: 22px; width: 9px; height: 807px; background: linear-gradient(#a2666d 0, #b56767 50px, #c8694f 130px, #b86c62 200px, #855e70 270px, #b4666a 340px, #cf5a40 355px, #23202c 357px, #34394c 420px, #272734 475px, #4d6e83 495px, #3c6075 570px, #21242c 590px, #38231e 640px, #1c1210 740px, #0b0808 807px); }
.edge-right { position: absolute; right: 0; top: 22px; width: 4px; height: 807px; background: linear-gradient(#625278, #23416d 120px, #263c60 400px, #50403f 480px, #a26037 520px, #351c18 590px, #25303f 620px, #131421); }

.win-a { position: absolute; left: 113px; top: 800px; width: 170px; height: 37px; background: #8f8f8f; border-radius: 0 0 0 5px; display: flex; gap: 40px; padding: 19px 0 0 24px; font-size: 12px; line-height: 15px; letter-spacing: .2px; color: #3f3f3f; white-space: nowrap; overflow: hidden; }
.win-c { position: absolute; left: 1354px; top: 800px; width: 85px; height: 91px; background: linear-gradient(100deg, #6b6b6b, #bababa); border-radius: 0 0 6px 0; display: flex; flex-direction: column; justify-content: flex-end; overflow: hidden; }
.win-c-foot { height: 23px; border-top: 1px solid #8b8b8b; background: #d2d2d2; font-size: 11px; line-height: 22px; text-align: right; padding-right: 24px; color: #444; }
.win-b { position: absolute; left: 264px; top: 827px; width: 1090px; height: 25px; background: linear-gradient(#818181, #989898); border-top: 2px solid #5d5d5d; display: flex; align-items: center; padding-left: 28px; font-size: 12px; color: #363636; white-space: nowrap; }
.wb { letter-spacing: .02px; }
.wb1 { width: 110px; } .wb2 { width: 102px; } .wb3 { margin-right: 21px; } .wb4 { flex: 1; }
.views { display: flex; align-items: center; gap: 21px; }
.view-on { width: 38px; height: 23px; background: #626262; display: flex; align-items: center; justify-content: center; margin-right: -11px; }
.zoomer { display: flex; align-items: center; margin-left: 33px; width: 247px; }
.minus { width: 9px; height: 2px; background: #333; }
.track { width: 98px; height: 4px; border-radius: 2px; background: #555; margin: 0 22px 0 23px; display: flex; align-items: center; justify-content: center; padding-left: 9px; }
.knob { width: 12px; height: 12px; border-radius: 50%; background: #aaa; border: 1px solid #666; }
.plus { width: 8px; height: 8px; margin-right: 33px; background: linear-gradient(#333, #333) 50% 50% / 8px 2px no-repeat, linear-gradient(#333, #333) 50% 50% / 2px 8px no-repeat; }

.menubar { position: absolute; left: 0; top: 0; width: 1440px; height: 23px; display: flex; justify-content: space-between; background: linear-gradient(90deg, #fadadb, #f5dbdc 22%, #eadde6 36%, #f7dde0 55%, #ffdfd7 74%, #fadde0 82%, #e8d3e0 92%, #d5cee4); border-bottom: 1px solid #70464b; font-size: 14px; line-height: 22px; color: #2b1d20; letter-spacing: -.13px; }
.menus { display: grid; grid-template-columns: 33px 73px 41px 44px 49px 65px 90px 67px 42px 70px 40px; padding-left: 21px; white-space: nowrap; }
.menus svg { margin-top: 2px; }
.menus b { letter-spacing: -.1px; }
.status { display: grid; grid-template-columns: 34px 24px 26px 30px 25px 32px 31px 29px 42px 81px 29px 20px; align-items: center; width: 424px; white-space: nowrap; }
.status .pct { font-size: 12.500px; letter-spacing: -.8px; }
.status .clock { font-size: 14px; letter-spacing: -.05px; }

.chrome { position: absolute; left: 7px; top: 23px; width: 1431px; height: 804px; border-radius: 6px 6px 5px 5px; overflow: hidden; background: #fff; box-shadow: 0 2px 3px rgba(0,0,0,.5); display: flex; flex-direction: column; }
.tabstrip { height: 42px; flex: none; background: #dee1e8; display: flex; align-items: center; padding-left: 13px; }
.lights { display: flex; gap: 8px; width: 66px; }
.lights i { width: 12px; height: 12px; border-radius: 50%; }
.r { background: #fe4a47; } .y { background: #fdbc05; } .g { background: #07cf2c; }
.tabs { display: flex; align-self: flex-end; height: 34px; }
.tab { width: 77px; display: flex; align-items: center; padding-left: 8px; font-size: 12.500px; color: #45484d; position: relative; }
.tab svg { width: 14px; height: 15px; margin-right: 9px; }
.tab span { width: 38px; overflow: hidden; white-space: nowrap; letter-spacing: -.1px; -webkit-mask-image: linear-gradient(90deg, #000 65%, transparent); mask-image: linear-gradient(90deg, #000 65%, transparent); }
.tab::after { content: ""; position: absolute; right: 0; top: 7px; width: 1px; height: 20px; background: #888b90; }
.nosep::after, .active::after { display: none; }
.tab.active { width: 78px; background: #fff; border-radius: 8px 8px 0 0; padding-left: 8px; color: #3c4043; }
.active span { width: 19px; -webkit-mask-image: linear-gradient(90deg, #000 60%, rgba(0,0,0,.4)); mask-image: linear-gradient(90deg, #000 60%, rgba(0,0,0,.4)); }
.tab.active svg.x { width: 10px; height: 10px; margin: 0 0 0 7px; }
.tab.late { width: 76.200px; }
.tab em { width: 16px; height: 16px; margin: 0 8px 0 -1px; border-radius: 3px; background: #ff4f0a; color: #fff; font: bold 12px/15px "Liberation Serif", serif; text-align: center; }
.newtab { margin: 8px 0 0 16px; }
.tabsmenu { margin: 8px 16px 0 auto; }

.toolbar { height: 36px; flex: none; display: flex; align-items: center; padding-left: 15px; }
.navbtns { display: flex; gap: 17px; width: 92px; }
.omni { width: 1012px; height: 30px; border: 2px solid #3b7af4; border-radius: 15px; display: flex; align-items: center; padding-left: 10px; padding-right: 10px; font-size: 14px; line-height: 24px; color: #202124; white-space: nowrap; }
.omni span { padding-bottom: 1px; }
.scheme { margin-left: 8px; width: 29px; color: #5f6368; letter-spacing: -.2px; }
.omni i { width: 1px; height: 16px; background: #9a9da1; margin-right: 10px; }
.url { flex: 1; letter-spacing: -.24px; }
.share { margin-right: 19px; }
.exts { display: flex; align-items: center; margin-left: 13px; }
.exts > :nth-child(1) { margin: 5px 11px 0 0; }
.exts > :nth-child(2) { margin-right: 17px; }
.exts > :nth-child(3) { margin-right: 15px; }
.exts > :nth-child(4) { margin-right: 17px; }
.exts > :nth-child(5) { margin-right: 17px; }
.exts > :nth-child(6) { margin-right: 14px; }
.avatar { width: 22px; height: 22px; border-radius: 50%; background: #00503f; color: #fff; font-size: 11.500px; line-height: 22px; text-align: center; }
.error { margin-left: auto; margin-right: 8px; width: 73px; height: 28px; border: 1px solid #202124; border-radius: 14px; background: #f0f0f0; display: flex; align-items: center; justify-content: space-between; padding: 0 11px 0 12px; font-size: 13px; letter-spacing: -.1px; color: #202124; }
.error i { width: 4px; height: 13px; background: radial-gradient(circle at 50% 50%, #f79c1c 1.300px, transparent 1.700px) 0 0 / 4px 4.500px; }
.bookmarks { height: 33px; flex: none; display: flex; align-items: center; padding: 0 0 5px 16px; border-bottom: 1px solid #d9dadc; font-size: 12.500px; color: #3a3c40; white-space: nowrap; }
.bm1 { margin-left: 9px; width: 80px; letter-spacing: -.42px; }
.bmg { margin-right: 9px; }
.bm2 { width: 110px; letter-spacing: -.25px; }

.page { flex: 1; padding: 0 67px 0 68px; font-family: "Liberation Serif", serif; display: flex; flex-direction: column; background: linear-gradient(#fff 95%, #f7f7f7); overflow: hidden; white-space: nowrap; }
.page > * { flex: none; }
.sitenav { height: 73px; padding-left: 70px; display: grid; grid-template-columns: 248px 271px 238px 309px 90px; font-weight: bold; font-size: 22px; line-height: 42px; color: #ccc; letter-spacing: 0; }
.n1 { letter-spacing: .25px; }
.n4 { color: #000; letter-spacing: .45px; }
.rule { height: 5px; background: #00c3ae; }
.switch { margin-top: 32px; height: 57px; border: 1px solid #ececec; border-radius: 0 8px 8px 8px; display: flex; font-size: 22px; }
.sw-left { width: 648px; padding: 3px; border-right: 2px solid #ececec; }
.pill { height: 49px; width: 640px; border-radius: 8px; background: #00bbc7; color: #fff; text-align: center; line-height: 52px; }
.sw-right { flex: 1; text-align: center; line-height: 55px; color: #000; letter-spacing: .27px; -webkit-text-stroke: .35px #000; }
.actions { margin-top: 40px; height: 60px; border-radius: 4px 4px 0 0; background: #f7f7f7; display: flex; justify-content: flex-end; align-items: center; gap: 12px; padding-right: 12px; }
button { height: 38px; border: 1px solid #aaa; border-radius: 19px; background: #fff; font: 17.500px "Liberation Serif", serif; color: #222; display: flex; align-items: center; padding: 0; }
.filter { width: 102px; padding-left: 19px; gap: 5px; letter-spacing: .4px; color: #444; }
.action { width: 101px; padding-left: 16px; gap: 10px; }
.add { width: 82px; padding-left: 16px; gap: 10px; font-size: 17px; }
.search { margin: 40px 0 0 auto; width: 397px; height: 50px; border: 1px solid #ececec; border-radius: 5px; display: flex; align-items: center; justify-content: space-between; padding: 0 11px 0 16px; font-size: 17px; color: #888; }
.search span { padding-top: 1px; }
.stripe { margin: 20px 0 0 auto; width: 172px; height: 51px; border-radius: 8px; background: linear-gradient(90deg, #2bca8c, #00c999 18%, #00bcc0); color: #fff; font-weight: bold; font-size: 19px; line-height: 51px; letter-spacing: .2px; text-align: center; }
.dates { margin: 20px 0 0 auto; width: 279px; height: 50px; border: 1px solid #d2d2d2; border-radius: 7px; display: flex; padding-left: 15px; font-size: 18px; line-height: 45px; letter-spacing: .3px; color: #777; }
.dates span { width: 95px; }
.dates i { width: 45px; text-align: center; padding-left: 6px; line-height: 41px; }

.table { margin-top: 20px; border: 1px solid #dde1e5; border-radius: 8px 8px 0 0; }
.row { height: 61px; display: grid; grid-template-columns: 128px 191px 195px 182px 192px 149px 127px 130px; border-top: 1px solid #dde1e5; color: #212529; }
.row > div { display: flex; align-items: center; justify-content: center; border-right: 1px solid #dde1e5; position: relative; }
.row > div:last-child { border-right: 0; }
.head { height: 71px; border-top: 0; font-weight: bold; font-size: 17px; letter-spacing: .1px; color: #000; }
.head > div { padding-top: 4px; }
.head > .ckh { padding-right: 4px; }
.net svg { margin-left: 4px; }
.id { font-size: 15.500px; padding-top: 3px; }
.row > .date { flex-direction: column; font-size: 16px; line-height: 17px; letter-spacing: .15px; }
.date small { font-size: 13px; line-height: 14px; }
.date.one { padding-top: 2px; }
.tools { position: absolute; right: 6px; bottom: 10px; display: flex; gap: 7px; align-items: flex-end; }
.row > .client { flex-direction: column; justify-content: flex-start; padding-top: 13px; font-size: 18px; line-height: 18px; letter-spacing: .15px; }
.client u { font: 12.500px/16px Inter, sans-serif; letter-spacing: -.65px; color: #000; }
.amt { font-size: 15px; color: #52667a; padding-top: 1px; }
.amt small { font-size: 10.500px; letter-spacing: 0; }
.row > .two { flex-direction: column; justify-content: flex-start; padding-top: 16px; font-size: 16.500px; line-height: 19px; color: #212529; }
.two small { color: #52667a; }
.two em { font-size: 11px; line-height: 7px; letter-spacing: -.1px; }
.opt { font-size: 16px; letter-spacing: .2px; color: #111; }
.ok { height: 29px; width: 89px; border-radius: 4px; background: #eaf8f1; color: #6cd9a2; font-size: 17px; line-height: 30px; text-align: center; }
.inv { font-size: 14px; color: #44525f; }
.inv b { font: 13.500px Inter, sans-serif; }
.inv sub { font-size: 13px; vertical-align: -6px; line-height: 0; }
.row > .ck { padding: 2px 6px 0 0; }

.dock { position: absolute; left: 32px; top: 850px; width: 1376px; height: 50px; border-radius: 6px 6px 0 0; background: linear-gradient(90deg, #544d50, #63595c 14%, #8c8689 23%, #b9b7ba 31%, #c2c1c6 50%, #c8c4c9 68%, #d6c2be 80%, #d3c2c1 90%, #c4c3c9); display: flex; padding-left: 3px; }
.ic { width: 40.960px; height: 47px; display: flex; align-items: center; justify-content: center; position: relative; }
.run::after { content: ""; position: absolute; left: 18px; top: 44px; width: 4px; height: 4px; border-radius: 50%; background: #2a2526; }
.badge { position: absolute; right: 0; top: 4px; width: 15px; height: 15px; border-radius: 8px; background: #f5131c; color: #fff; font-size: 9.500px; line-height: 15px; text-align: center; }
.wide { width: 18px; right: -1px; font-size: 8.500px; letter-spacing: -.2px; }
.ic strong { position: absolute; left: 6px; top: 14px; color: #fff; font: bold 14px/18px "Open Sans", sans-serif; }
.office { margin-top: -3px; }
.sep { width: 1px; height: 37px; margin: 6px 7px 0 9px; background: #a59c9e; }
```
